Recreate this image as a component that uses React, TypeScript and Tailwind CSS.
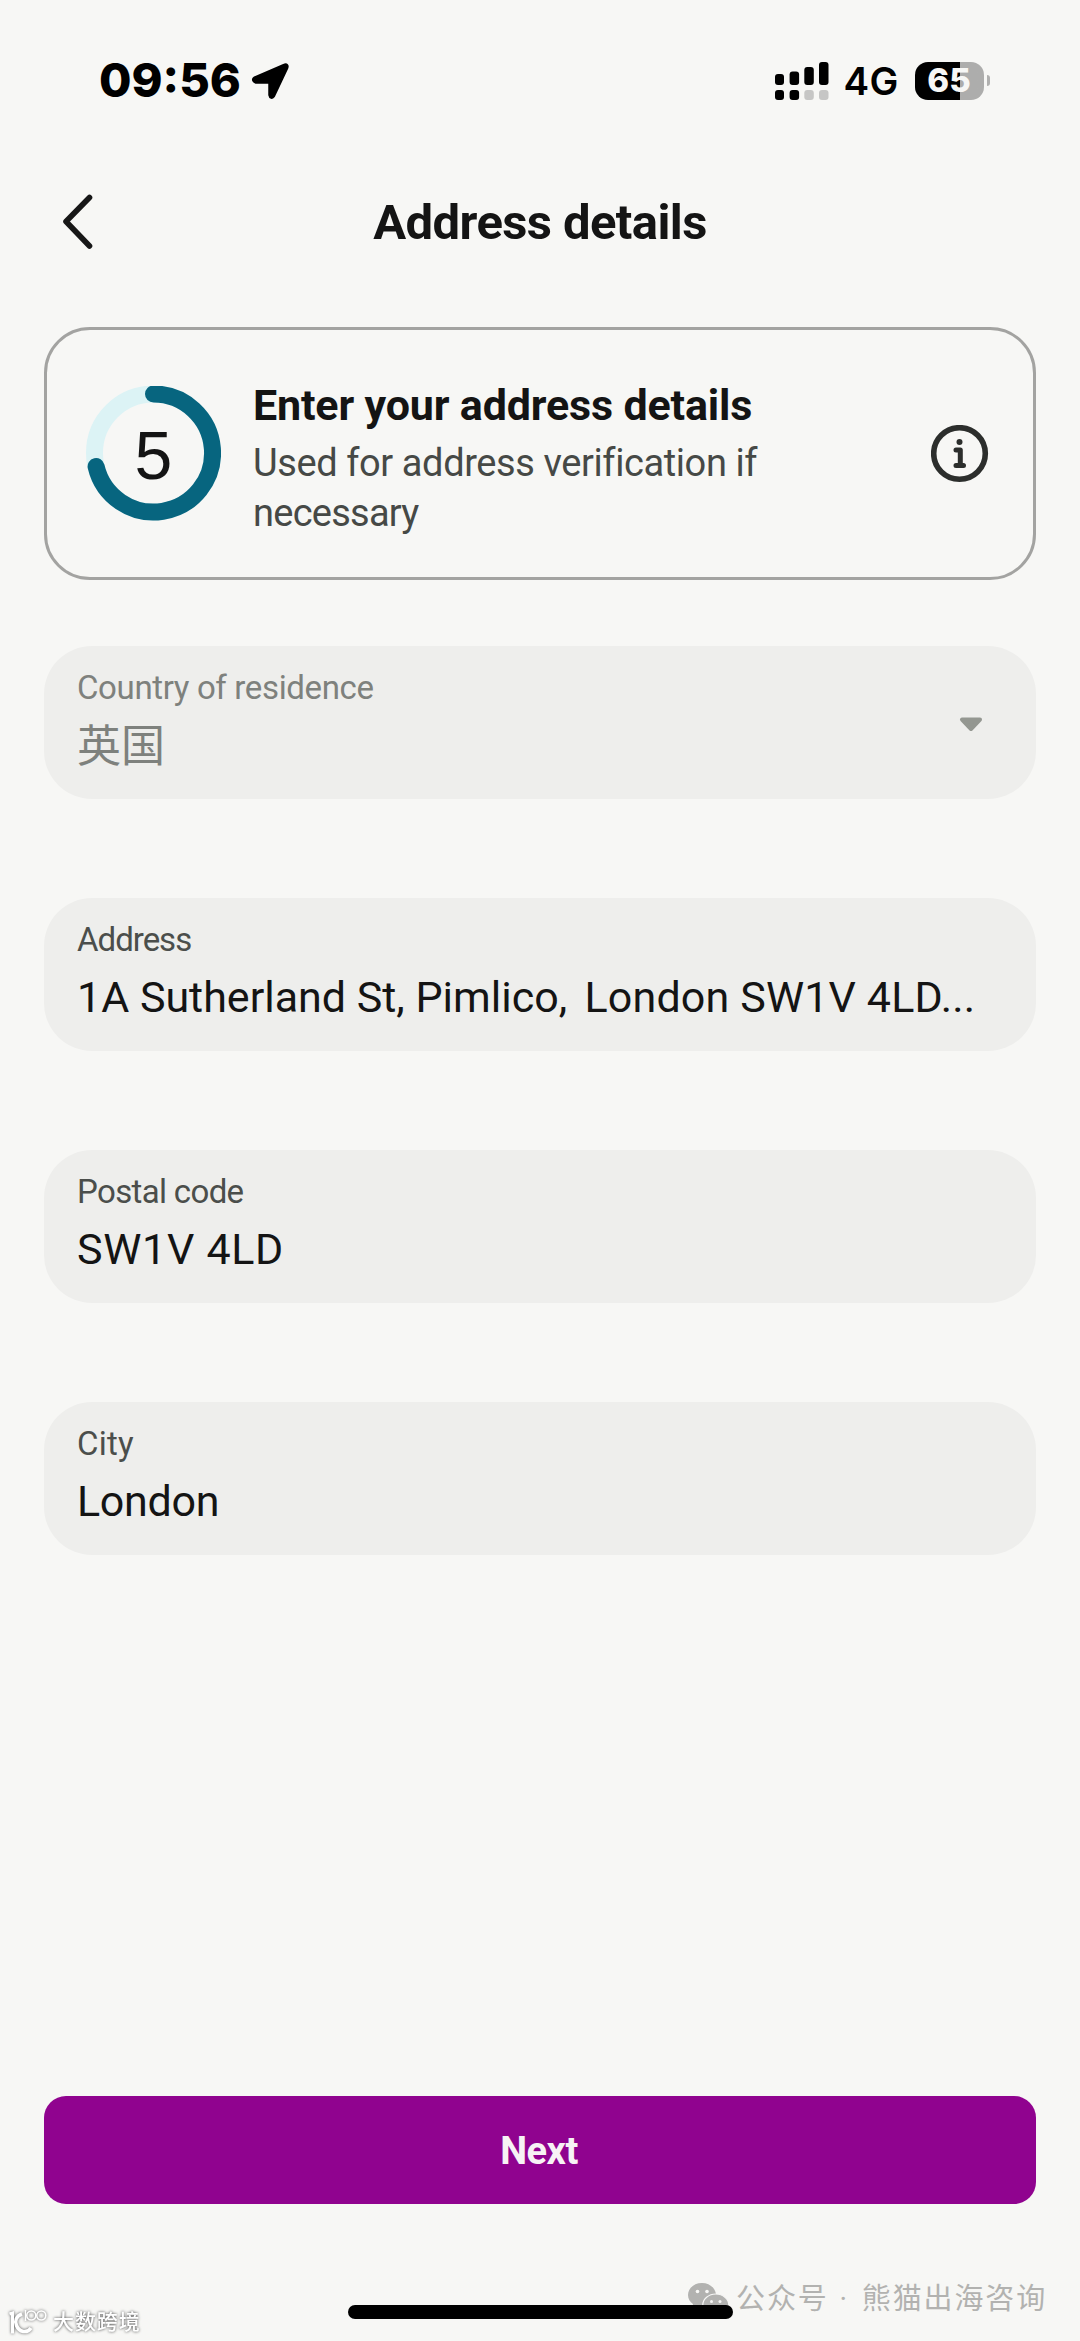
import { ReactNode } from 'react'
import { twJoin } from 'tailwind-merge'

type FieldProps = {
  label: string
  value: ReactNode
  labelClass?: string
  valueClass?: string
  disabled?: boolean
}

const FIELDS: FieldProps[] = [
  {
    label: 'Country of residence',
    value: '英国',
    labelClass: 'tracking-[-0.36px]',
    valueClass: 'text-[44px] pt-[2px]',
    disabled: true
  },
  {
    label: 'Address',
    value: (
      <>
        1A Sutherland St, Pimlico,<span className="tracking-[-2px]">{'\u00a0 '}</span>
        <span className="tracking-[0.15px]">London SW1V 4LD...</span>
      </>
    ),
    labelClass: 'tracking-[-1px]',
    valueClass: 'text-[43px] tracking-[0px]'
  },
  {
    label: 'Postal code',
    value: 'SW1V 4LD',
    labelClass: 'tracking-[-0.65px]',
    valueClass: 'text-[43px] tracking-[0.7px]'
  },
  {
    label: 'City',
    value: 'London',
    labelClass: 'tracking-[0.2px]',
    valueClass: 'text-[43px] tracking-[-0.3px]'
  }
]

export default function App(): ReactNode {
  return (
    <div className="flex h-[2341px] w-[1080px] flex-col overflow-hidden bg-[#f7f7f5] font-[Roboto,'Noto_Sans_CJK_SC',sans-serif] text-[#141414]">
      <StatusBar />

      <header className="flex h-[122px] items-center justify-between px-[61px]">
        <svg width="32" height="58" viewBox="0 0 32 58" fill="none">
          <path
            d="M28.500 4.500 5 28.500 28.500 53"
            stroke="#171717"
            strokeWidth="5.600"
            strokeLinecap="round"
            strokeLinejoin="round"
          />
        </svg>
        <h1 className="pt-px text-[49px] leading-[60px] font-bold tracking-[-0.6px]">
          Address details
        </h1>
        <div className="w-8" />
      </header>

      <main className="flex grow flex-col px-11 pt-11">
        <StepCard />
        <div className="mt-[65.500px] flex flex-col gap-[98.6px]">
          {FIELDS.map((field) => (
            <Field key={field.label} {...field} />
          ))}
        </div>
        <button
          type="button"
          className="mt-auto h-[108px] rounded-[22px] bg-[#90038f] pt-[3px] pr-[2px] text-[38px] font-bold tracking-[-0.5px] text-[#f7f3f5]"
        >
          Next
        </button>
      </main>

      <Footer />
    </div>
  )
}

function StatusBar(): ReactNode {
  return (
    <div className="flex h-[161px] items-center justify-between pr-[90px] pl-[99px] font-[Inter,sans-serif] text-black">
      <div className="flex items-center">
        <span className="w-[151px] text-[47px] font-extrabold tracking-[0px]">09:56</span>
        <svg width="41" height="40" viewBox="0 0 41 40">
          <path
            d="M5 17.500 34 5Q37.500 3.500 36 7L23 34.500Q21 37 20.500 34V20.500H6Q3 19 5 17.500Z"
            stroke="#000"
            strokeWidth="4.500"
            strokeLinejoin="round"
          />
        </svg>
      </div>
      <div className="flex items-center">
        <svg width="54" height="38" viewBox="0 0 54 38">
          <rect x="0" y="12" width="9" height="11" rx="3" />
          <rect x="14.600" y="9.500" width="9.500" height="13.500" rx="3" />
          <rect x="29.300" y="5" width="9.500" height="18" rx="3" />
          <rect x="44" y="0" width="9.500" height="23" rx="3" />
          <rect x="0" y="28" width="9" height="10" rx="3" />
          <rect x="14.600" y="28" width="9.500" height="10" rx="3" />
          <rect x="29.300" y="28" width="9.500" height="10" rx="3" fill="#c6c6c5" />
          <rect x="44" y="28" width="9.500" height="10" rx="3" fill="#c6c6c5" />
        </svg>
        <span className="ml-[15px] w-[71px] pt-[2px] text-[38.500px] font-semibold tracking-[0.3px]">
          4G
        </span>
        <div className="flex items-center gap-[3px]">
          <div className="flex h-[38px] w-[69px] items-center justify-center rounded-[13px] bg-linear-to-r from-black from-65% to-[#adadac] to-65% text-[33px] leading-none font-extrabold text-[#f7f7f5]">
            65
          </div>
          <div className="h-[11px] w-[3.500px] rounded-r-full bg-[#b0b0af]" />
        </div>
      </div>
    </div>
  )
}

function StepCard(): ReactNode {
  return (
    <section className="flex h-[253px] items-center rounded-[46px] border-3 border-[#a3a3a1] pr-[44px] pl-[39px]">
      <svg width="135" height="135" viewBox="0 0 135 135" fill="none">
        <circle cx="67.500" cy="67" r="59" stroke="#dcf3f5" strokeWidth="17" />
        <path
          d="M67.500 8A59 59 0 1 1 10.100 80.500"
          stroke="#07657f"
          strokeWidth="17"
          strokeLinecap="round"
        />
        <text
          x="67.500"
          y="92.500"
          textAnchor="middle"
          fill="#141414"
          className="font-['Liberation_Sans',sans-serif] text-[68px]"
        >
          5
        </text>
      </svg>
      <div className="ml-8 grow self-start pt-[47px]">
        <h2 className="text-[43px] leading-14 font-bold tracking-[-0.16px]">
          Enter your address details
        </h2>
        <p className="mt-1.5 w-[560px] text-[38px] leading-[49.500px] tracking-[-0.4px] text-[#464946]">
          Used for address verification if <span className="tracking-[-0.75px]">necessary</span>
        </p>
      </div>
      <svg width="58" height="58" viewBox="0 0 58 58" fill="none" stroke="#2c2e2c">
        <circle cx="28.500" cy="28.500" r="25.800" strokeWidth="5.600" />
        <circle cx="28.500" cy="17" r="3" fill="#2c2e2c" stroke="none" />
        <path
          d="M25 25h4.300v15M25 40.500h7.500"
          strokeWidth="5"
          strokeLinecap="round"
          strokeLinejoin="round"
        />
      </svg>
    </section>
  )
}

function Field({ label, value, labelClass, valueClass, disabled }: FieldProps): ReactNode {
  return (
    <div className="flex h-[153.500px] items-start justify-between rounded-[48px] bg-[#eeeeec] pt-[22px] pr-[53px] pl-[33px]">
      <div className={twJoin('whitespace-pre', disabled && 'text-[#7e817d]')}>
        <div
          className={twJoin(
            'text-[33px] leading-10',
            !disabled && 'text-[#4b4e4b]',
            labelClass
          )}
        >
          {label}
        </div>
        <div className={twJoin('mt-[9px] leading-14', valueClass)}>{value}</div>
      </div>
      {disabled && (
        <svg width="24" height="15" viewBox="0 0 24 15" className="mt-[49px]">
          <path
            d="M3 2.500h18L12 12Z"
            fill="#949791"
            stroke="#949791"
            strokeWidth="4"
            strokeLinejoin="round"
          />
        </svg>
      )}
    </div>
  )
}

function Footer(): ReactNode {
  return (
    <footer className="relative flex h-[137px] shrink-0 justify-center pt-[101px]">
      {/* account watermark */}
      <div className="absolute top-[73px] left-[687px] flex items-center text-[#b2b2b0]">
        <svg width="42" height="36" viewBox="0 0 42 36" fill="#b2b2b0">
          <path d="M15 2C7 2 1 7.500 1 14c0 4 2 7 5 9l-1 5 5-3c2 .7 4 .8 6 .8L29 13C28 6.500 22 2 15 2Z" />
          <ellipse cx="28.800" cy="24" rx="13" ry="11" stroke="#f7f7f5" strokeWidth="1.200" />
          <g fill="#f7f7f5">
            <circle cx="10.500" cy="10.500" r="1.800" />
            <circle cx="20" cy="10.500" r="1.800" />
            <circle cx="24.500" cy="20.500" r="1.500" />
            <circle cx="33" cy="20.500" r="1.500" />
          </g>
        </svg>
        <span className="ml-[7px] pt-px text-[29px] leading-[42px] tracking-[1.900px] whitespace-pre">
          公众号<span className="tracking-[3.700px]"> · </span>熊猫出海咨询
        </span>
      </div>
      <div className="absolute top-[103px] left-[7px] flex items-center gap-[5px] text-white">
        <svg
          width="41"
          height="30"
          viewBox="0 0 41 30"
          fill="none"
          stroke="#fff"
          className="drop-shadow-[0_0_1.500px_#555]"
        >
          <path d="M2.500 7 5.500 6V26.500" strokeWidth="3" />
          <path d="M15 7C9 9 7.500 14 9.500 18.500 12 25 20 27 24 21" strokeWidth="3.500" />
          <path d="M18.500 3v11" strokeWidth="1.600" />
          <circle cx="24.300" cy="8.500" r="4.500" strokeWidth="1.600" />
          <circle cx="34.300" cy="8.500" r="4.500" strokeWidth="1.600" />
        </svg>
        <span className="text-[21px] leading-[30px] font-medium tracking-[0.900px] drop-shadow-[0_0_1.500px_#444]">
          大数跨境
        </span>
      </div>
      <div className="relative h-[14px] w-[385px] rounded-full bg-black" />
    </footer>
  )
}
